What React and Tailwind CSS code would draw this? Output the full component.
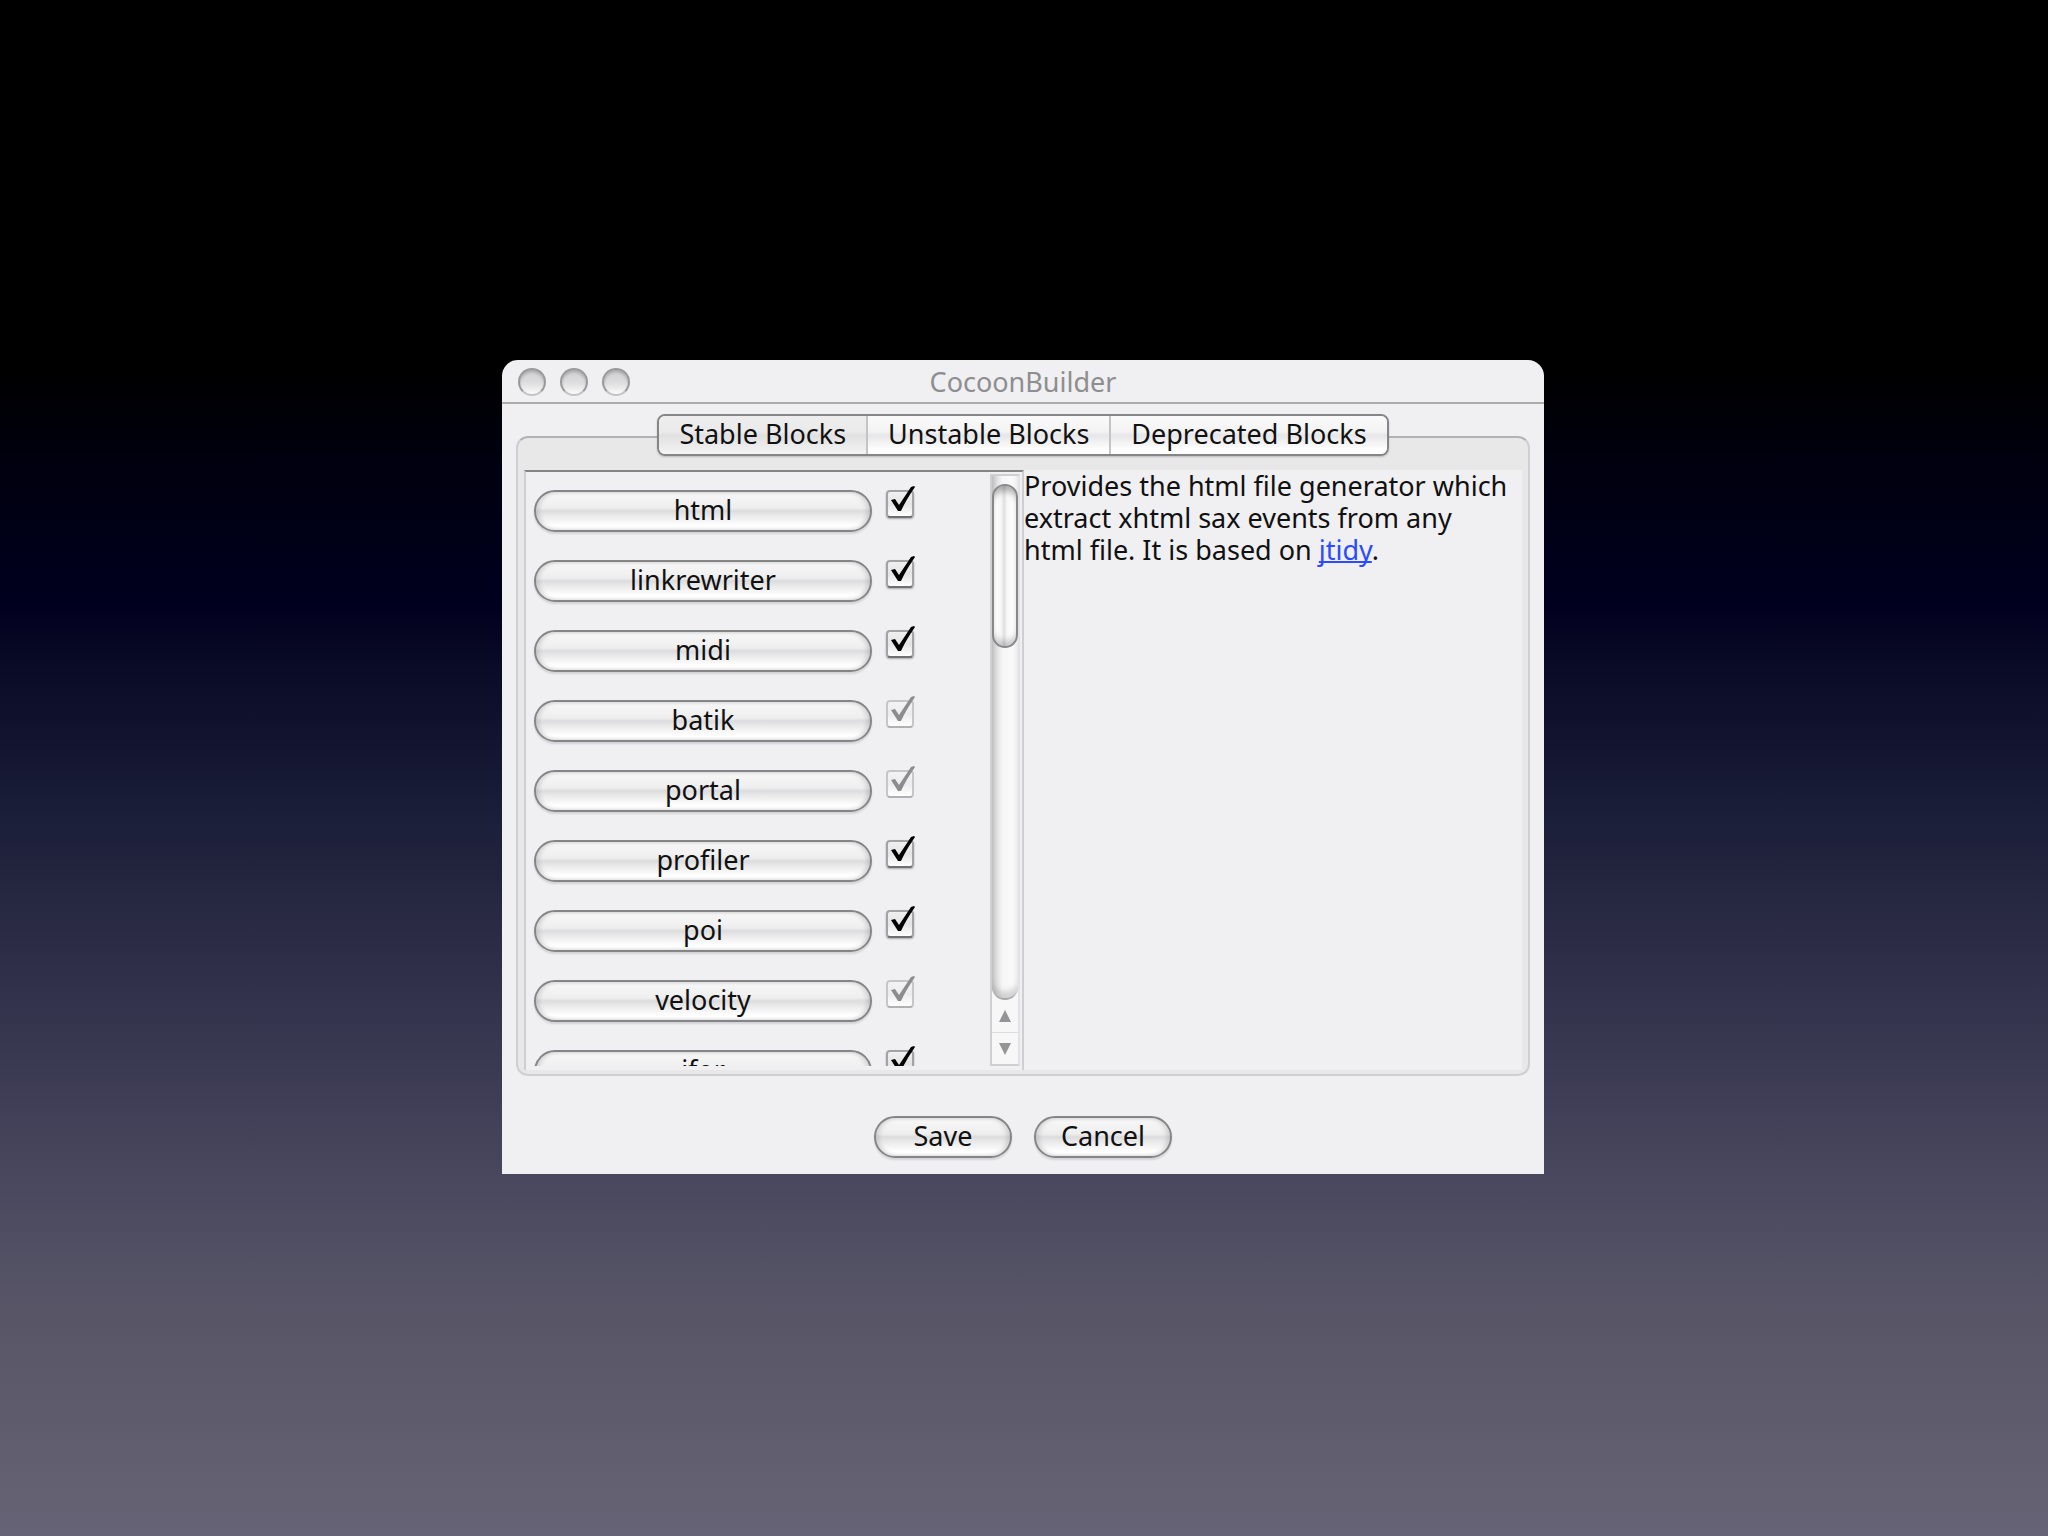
import React, { useState } from 'react';
import clsx from 'clsx';

const TABS = ['Stable Blocks', 'Unstable Blocks', 'Deprecated Blocks'];

const BLOCKS = [
  { name: 'html', locked: false },
  { name: 'linkrewriter', locked: false },
  { name: 'midi', locked: false },
  { name: 'batik', locked: true },
  { name: 'portal', locked: true },
  { name: 'profiler', locked: false },
  { name: 'poi', locked: false },
  { name: 'velocity', locked: true },
  { name: 'jfor', locked: false },
];

function AquaButton({ children, className, ...props }) {
  return (
    <button
      type="button"
      className={clsx(
        'h-[42px] shrink-0 rounded-full border-2 border-[#858587] bg-[linear-gradient(to_bottom,#f8f8f8_0%,#eeeeef_42%,#dcdcde_50%,#e9e9ea_62%,#fff_88%)] pb-0.5 text-center leading-8 shadow-[0_2px_2px_rgba(0,0,0,0.12),inset_3px_0_4px_rgba(0,0,0,0.12),inset_-3px_0_4px_rgba(0,0,0,0.12)]',
        className
      )}
      {...props}
    >
      {children}
    </button>
  );
}

function TrafficLight({ label }) {
  return (
    <button
      type="button"
      aria-label={label}
      className="size-7 rounded-full border-2 border-[#9a9a9c] border-b-[#c4c4c6] bg-linear-to-b from-[#d0d0d2] via-[#dcdcde] to-[#fbfbfb] shadow-[inset_0_2px_3px_rgba(0,0,0,0.2)]"
    />
  );
}

function BlockCheckbox({ name, checked, disabled, onChange }) {
  return (
    <span className="relative h-7 w-7 shrink-0">
      <input
        type="checkbox"
        aria-label={name}
        checked={checked}
        disabled={disabled}
        onChange={onChange}
        className="block size-7 appearance-none rounded-sm border-2 border-[#a3a3a5] border-b-[#6f6f71] bg-linear-to-b from-[#f0f0f0] via-[#e4e4e6] to-white shadow-[0_1px_2px_rgba(0,0,0,0.3)] disabled:border-[#c6c6c8] disabled:border-b-[#b0b0b2] disabled:from-[#f3f3f4] disabled:via-[#ececee] disabled:shadow-none"
      />
      {checked && (
        <svg
          viewBox="0 0 28 32"
          className={clsx(
            'pointer-events-none absolute -top-1 left-0 h-8 w-7 overflow-visible',
            disabled ? 'fill-[#8c8c8e]' : 'fill-black'
          )}
        >
          <path d="M5 14 L9 13 L13 19 L25 1 L28 0 L29 1 Q20 14 15 25 L12 25 Z" />
        </svg>
      )}
    </span>
  );
}

function Scroller() {
  return (
    <div className="flex w-[30px] shrink-0 flex-col border-2 border-[#cfcfd1] border-r-[#e2e2e4] bg-[#f7f7f8]">
      <div className="flex grow flex-col rounded-b-full border-b-2 border-[#a8a8aa] bg-linear-to-r from-[#cdcdcf] via-[#f6f6f7] via-40% to-[#fbfbfb] pt-2 shadow-[inset_0_-6px_6px_rgba(0,0,0,0.16)]">
        <div className="h-[164px] rounded-full border-2 border-[#88888a] bg-[linear-gradient(to_right,#fff_10%,#f4f4f5_35%,#dedee0_45%,#f8f8f8_60%,#fff_100%)] shadow-[inset_0_8px_6px_-3px_rgba(0,0,0,0.3),inset_0_-8px_6px_-3px_rgba(0,0,0,0.2)]" />
      </div>
      <button type="button" aria-label="Scroll up" className="flex h-8 items-center justify-center">
        <svg viewBox="0 0 12 12" className="size-3 fill-[#949496]">
          <path d="M6 0 L12 12 H0 Z" />
        </svg>
      </button>
      <button
        type="button"
        aria-label="Scroll down"
        className="flex h-8 items-center justify-center border-t border-[#dcdcde]"
      >
        <svg viewBox="0 0 12 12" className="size-3 fill-[#949496]">
          <path d="M6 12 L12 0 H0 Z" />
        </svg>
      </button>
    </div>
  );
}

export default function App() {
  const [tab, setTab] = useState(TABS[0]);
  const [checked, setChecked] = useState(() => BLOCKS.map(() => true));

  const toggle = (index) => setChecked(checked.map((value, i) => (i === index ? !value : value)));

  return (
    <div className="flex min-h-screen items-center justify-center bg-[linear-gradient(to_bottom,#000_0%,#000_24%,#00000f_30%,#00001e_39%,#0b0c28_44%,#1b1e38_53%,#2b2b45_61%,#3c3b54_70%,#4a485e_77%,#555365_84%,#5e5c6c_92%,#656375_100%)] pr-0.5 pb-0.5 font-['Noto_Sans',sans-serif] text-[27px] leading-8 text-[#111]">
      <main className="w-full max-w-[1042px] rounded-t-2xl bg-[#f0eff1]">
        {/* Title bar */}
        <header className="grid grid-cols-[1fr_auto_1fr] items-center border-b-2 border-[#adadaf] px-4 pt-1.5 pb-1">
          <div className="flex gap-3.5">
            <TrafficLight label="Close" />
            <TrafficLight label="Minimize" />
            <TrafficLight label="Zoom" />
          </div>
          <h1 className="text-[#8e8e90]">CocoonBuilder</h1>
        </header>

        <div className="px-3.5 pt-8">
          <section className="rounded-xl border-2 border-[#cfcfd1] border-t-[#b2b2b4] bg-[#e8e8e9] px-1.5 pb-1">
            {/* Tabs */}
            <div
              role="tablist"
              className="mx-auto -mt-6 flex h-[42px] w-fit overflow-hidden rounded-lg border-2 border-[#868688] shadow-[0_1px_2px_rgba(0,0,0,0.2)]"
            >
              {TABS.map((name) => (
                <button
                  key={name}
                  type="button"
                  role="tab"
                  aria-selected={tab === name}
                  onClick={() => setTab(name)}
                  className={clsx(
                    'border-l-2 border-[#c4c4c6] px-5 pb-0.5 first:border-l-0',
                    tab === name
                      ? 'bg-[linear-gradient(to_bottom,#eee_0%,#eaeaea_42%,#e0e0e1_50%,#f4f4f4_100%)]'
                      : 'bg-[linear-gradient(to_bottom,#fafafa_0%,#f3f3f4_42%,#e6e6e8_50%,#fff_90%)]'
                  )}
                >
                  {name}
                </button>
              ))}
            </div>

            <div className="mt-3.5 flex bg-[#f0eff1]">
              {/* Block list */}
              <div className="flex h-[600px] w-[500px] shrink-0 border-x-2 border-t-2 border-[#cfcfd1] border-t-[#858587] pt-0.5 pr-0.5 pb-1">
                <ul className="flex grow flex-col gap-7 overflow-hidden pt-4 pl-2">
                  {BLOCKS.map((block, index) => (
                    <li key={block.name} className="flex shrink-0 gap-3.5">
                      <AquaButton className="w-[338px]">{block.name}</AquaButton>
                      <BlockCheckbox
                        name={block.name}
                        checked={checked[index]}
                        disabled={block.locked}
                        onChange={() => toggle(index)}
                      />
                    </li>
                  ))}
                </ul>
                <Scroller />
              </div>

              <p className="grow pr-2.5">
                Provides the html file generator which extract xhtml sax events from any html file. It is based on{' '}
                <a href="#jtidy" className="text-[#2a4bff] underline decoration-2 [text-decoration-skip-ink:none]">
                  jtidy
                </a>
                .
              </p>
            </div>
          </section>
        </div>

        <footer className="flex justify-center gap-[22px] pt-10 pb-4">
          <AquaButton className="w-[138px]">Save</AquaButton>
          <AquaButton className="w-[138px]">Cancel</AquaButton>
        </footer>
      </main>
    </div>
  );
}
